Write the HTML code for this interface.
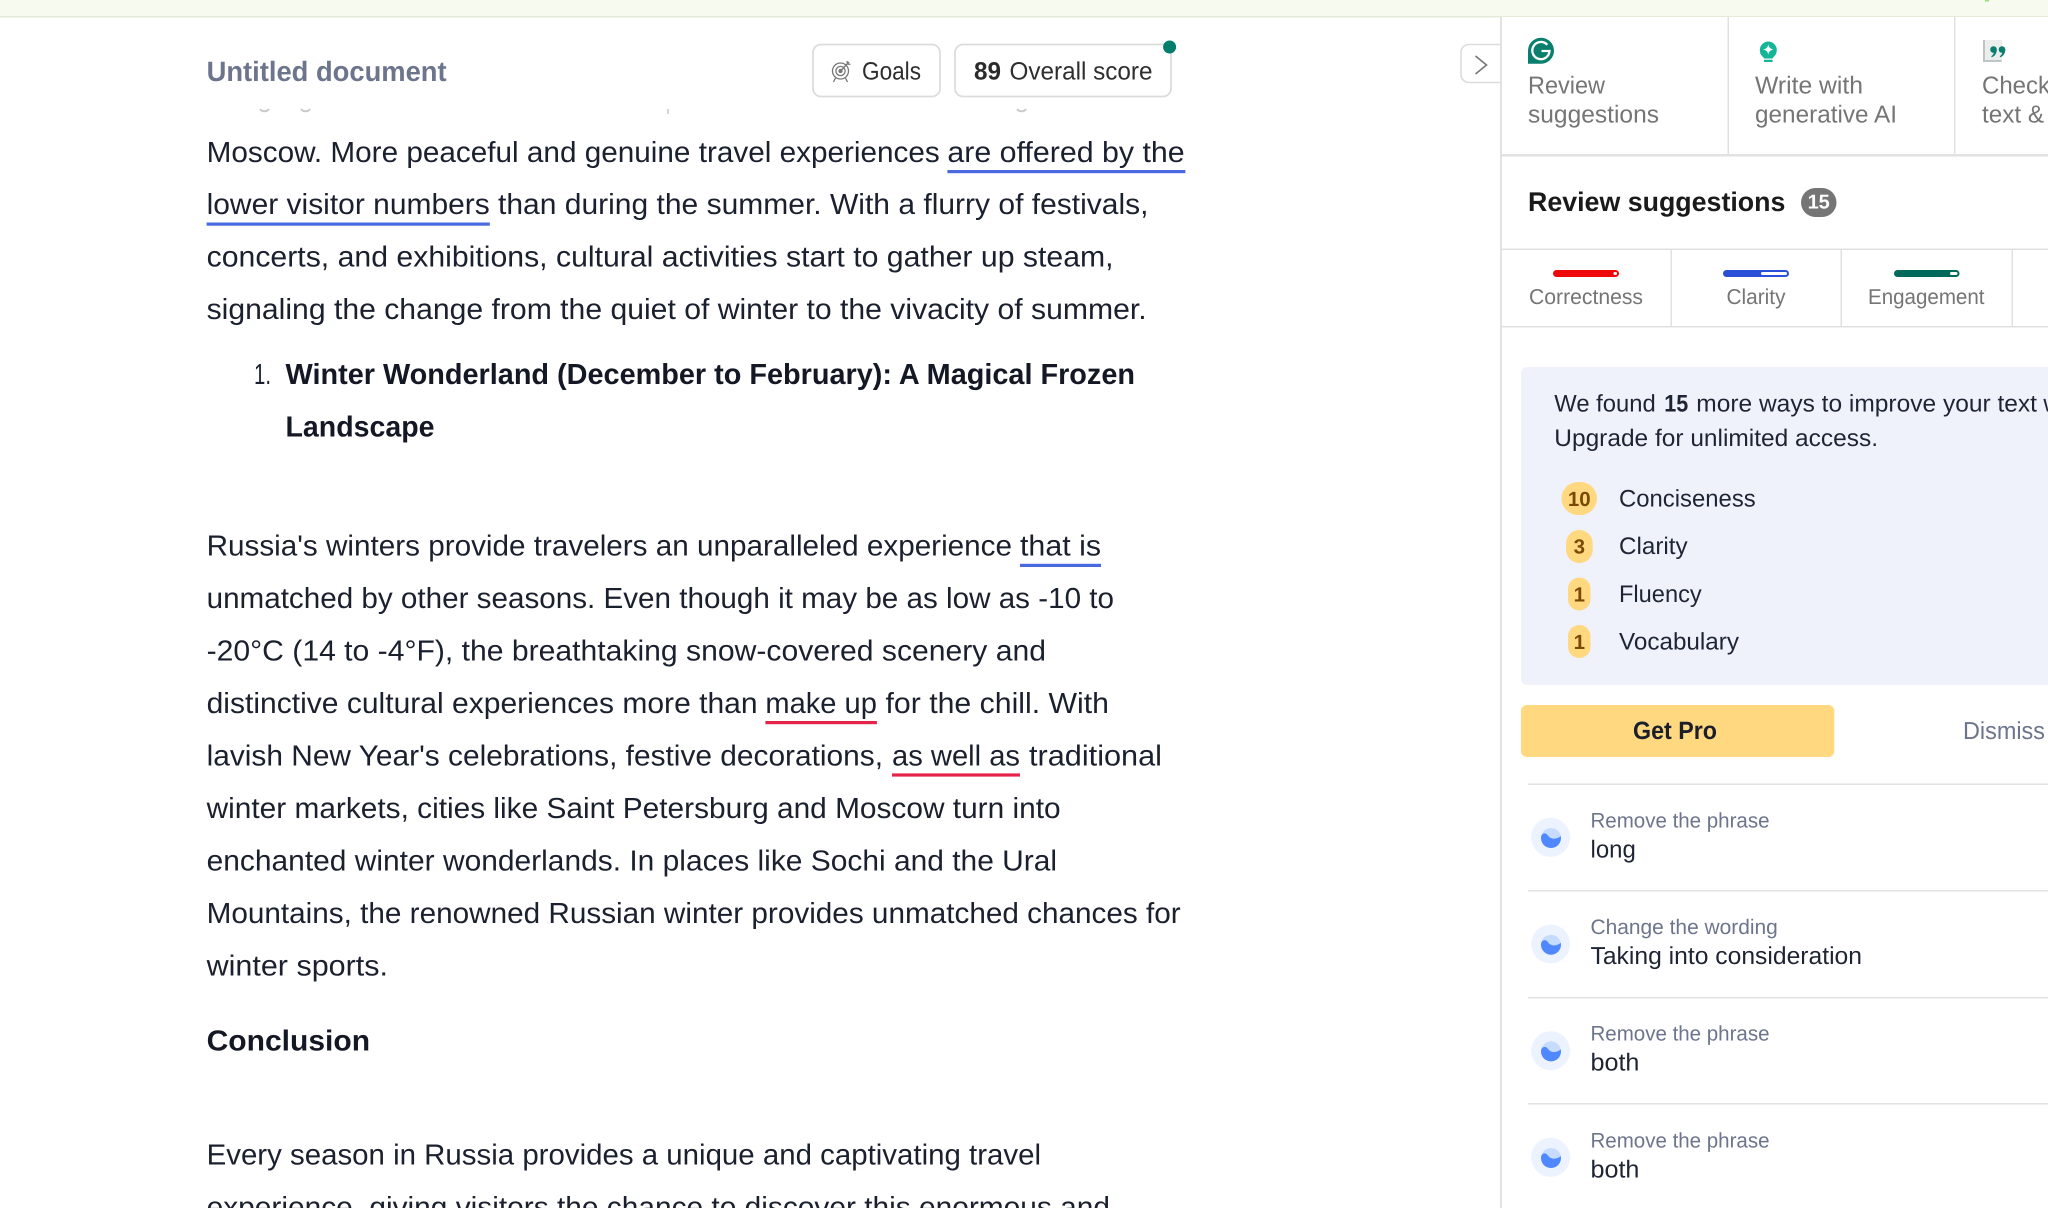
<!DOCTYPE html>
<html><head><meta charset="utf-8"><title>Untitled document</title>
<style>
html,body{margin:0;padding:0;background:#fff;width:2048px;height:1208px;overflow:hidden}
svg{display:block;filter:blur(.3px)}
text{font-family:"Liberation Sans",sans-serif;text-rendering:geometricPrecision;white-space:pre}
.b{font-size:29px;fill:#1b202e}
.h{font-size:29px;font-weight:bold;fill:#141824}
.t{font-size:24.500px;fill:#757575}
.c{font-size:21.500px;fill:#757575}
.p{font-size:24px;fill:#1e2433}
.s{font-size:21px;fill:#6d758d}
.v{font-size:24.500px;fill:#1e2433}
.n{font-size:20.500px;font-weight:bold;fill:#7a4a05;text-anchor:middle}
</style></head><body>
<svg xmlns="http://www.w3.org/2000/svg" width="2048" height="1208" viewBox="0 0 2048 1208">
<rect width="2048" height="1208" fill="#fff"/>
<rect width="2048" height="17" fill="#f6faef"/>
<rect y="16" width="2048" height="1.5" fill="#e4ebd9"/>
<rect x="1985" y="0" width="4" height="1.5" fill="#9be07a"/>

<!-- header -->
<text x="206.600" y="81" font-size="28" font-weight="bold" fill="#6d758d" textLength="240" lengthAdjust="spacingAndGlyphs">Untitled document</text>
<rect x="813" y="44.500" width="127" height="52" rx="8" fill="#fff" stroke="#dcdcdc" stroke-width="1.8"/>
<rect x="955" y="44.500" width="216" height="52" rx="8" fill="#fff" stroke="#dcdcdc" stroke-width="1.8"/>
<g fill="none" stroke="#777" stroke-width="1.300">
<circle cx="840.500" cy="71" r="8"/><circle cx="840.500" cy="71" r="4.600"/><circle cx="840.500" cy="71" r="1.500" fill="#777"/>
<path d="M841 70.500 849 62M847 61l.6 3 2.800.4M835.500 78l-2 4M845.500 78l2 4"/>
</g>
<text x="862" y="79.500" font-size="25" fill="#2e2e2e" textLength="59" lengthAdjust="spacingAndGlyphs">Goals</text>
<text x="974" y="79.500" font-size="25" font-weight="bold" fill="#2b2b2b" textLength="27" lengthAdjust="spacingAndGlyphs">89</text>
<text x="1009.500" y="79.500" font-size="25" fill="#2e2e2e" textLength="143" lengthAdjust="spacingAndGlyphs">Overall score</text>
<circle cx="1169.600" cy="47" r="6.500" fill="#007d6b"/>
<path d="M1500 44.500H1469a8 8 0 0 0-8 8V74.500a8 8 0 0 0 8 8H1500" fill="#fff" stroke="#dcdcdc" stroke-width="1.600"/>
<path d="M1475.500 56 1486.500 65 1475.500 74" fill="none" stroke="#777" stroke-width="1.600"/>

<!-- clipped descender remnants -->
<g fill="none" stroke="#c9c9c9" stroke-width="2">
<path d="M260 109a5 4 0 0 0 9 0M301 109a5 4 0 0 0 9 0M1017 109a5 4 0 0 0 9 0"/>
<path d="M668 109v5" stroke-width="1.500"/>
</g>

<!-- body text -->
<text class="b" x="206.600" y="162" textLength="733.200" lengthAdjust="spacingAndGlyphs">Moscow. More peaceful and genuine travel experiences</text>
<text class="b" x="947.400" y="162" textLength="237.300" lengthAdjust="spacingAndGlyphs">are offered by the</text>
<rect x="947.400" y="170" width="238" height="3.200" fill="#4869e0"/>
<text class="b" x="206.600" y="214" textLength="283.200" lengthAdjust="spacingAndGlyphs">lower visitor numbers</text>
<rect x="206.600" y="222.500" width="283.200" height="3.200" fill="#4869e0"/>
<text class="b" x="498" y="214" textLength="650.500" lengthAdjust="spacingAndGlyphs">than during the summer. With a flurry of festivals,</text>
<text class="b" x="206.600" y="266.500" textLength="907" lengthAdjust="spacingAndGlyphs">concerts, and exhibitions, cultural activities start to gather up steam,</text>
<text class="b" x="206.600" y="319" textLength="940" lengthAdjust="spacingAndGlyphs">signaling the change from the quiet of winter to the vivacity of summer.</text>

<text class="b" x="254" y="384" textLength="17" lengthAdjust="spacingAndGlyphs">1.</text>
<text class="h" x="285.500" y="384" textLength="849.500" lengthAdjust="spacingAndGlyphs">Winter Wonderland (December to February): A Magical Frozen</text>
<text class="h" x="285.500" y="436.500" textLength="149" lengthAdjust="spacingAndGlyphs">Landscape</text>

<text class="b" x="206.600" y="555.500" textLength="805.400" lengthAdjust="spacingAndGlyphs">Russia's winters provide travelers an unparalleled experience</text>
<text class="b" x="1020" y="555.500" textLength="81" lengthAdjust="spacingAndGlyphs">that is</text>
<rect x="1020" y="563.800" width="81" height="3.200" fill="#4869e0"/>
<text class="b" x="206.600" y="608" textLength="907.400" lengthAdjust="spacingAndGlyphs">unmatched by other seasons. Even though it may be as low as -10 to</text>
<text class="b" x="206.600" y="660.500" textLength="839.400" lengthAdjust="spacingAndGlyphs">-20°C (14 to -4°F), the breathtaking snow-covered scenery and</text>
<text class="b" x="206.600" y="713" textLength="551" lengthAdjust="spacingAndGlyphs">distinctive cultural experiences more than</text>
<text class="b" x="765.400" y="713" textLength="111.500" lengthAdjust="spacingAndGlyphs">make up</text>
<rect x="765.400" y="721" width="111.500" height="3.200" fill="#e5234a"/>
<text class="b" x="885.500" y="713" textLength="223.500" lengthAdjust="spacingAndGlyphs">for the chill. With</text>
<text class="b" x="206.600" y="765.400" textLength="676.400" lengthAdjust="spacingAndGlyphs">lavish New Year's celebrations, festive decorations,</text>
<text class="b" x="892" y="765.400" textLength="128" lengthAdjust="spacingAndGlyphs">as well as</text>
<rect x="892" y="773.400" width="128" height="3.200" fill="#e5234a"/>
<text class="b" x="1029" y="765.400" textLength="133" lengthAdjust="spacingAndGlyphs">traditional</text>
<text class="b" x="206.600" y="817.800" textLength="854" lengthAdjust="spacingAndGlyphs">winter markets, cities like Saint Petersburg and Moscow turn into</text>
<text class="b" x="206.600" y="870.500" textLength="850.500" lengthAdjust="spacingAndGlyphs">enchanted winter wonderlands. In places like Sochi and the Ural</text>
<text class="b" x="206.600" y="923" textLength="974.100" lengthAdjust="spacingAndGlyphs">Mountains, the renowned Russian winter provides unmatched chances for</text>
<text class="b" x="206.600" y="975.500" textLength="181.400" lengthAdjust="spacingAndGlyphs">winter sports.</text>
<text class="h" x="206.600" y="1050.500" textLength="163.500" lengthAdjust="spacingAndGlyphs">Conclusion</text>
<text class="b" x="206.600" y="1164.500" textLength="834.400" lengthAdjust="spacingAndGlyphs">Every season in Russia provides a unique and captivating travel</text>
<text class="b" x="206.600" y="1217" textLength="903.400" lengthAdjust="spacingAndGlyphs">experience, giving visitors the chance to discover this enormous and</text>

<!-- right panel -->
<rect x="1500" y="17" width="2" height="1191" fill="#e2e2e2"/>
<rect x="1502" y="17" width="546" height="1191" fill="#fff"/>
<rect x="1727.500" y="17" width="1.500" height="138" fill="#e0e0e0"/>
<rect x="1954" y="17" width="1.500" height="138" fill="#e0e0e0"/>
<rect x="1502" y="154" width="546" height="2.500" fill="#e2e2e2"/>

<!-- G logo -->
<path d="M1528 63.700V50.700a13 13 0 1 1 13 13Z" fill="#0a7f6e"/>
<path d="M1547.300 44.800a8.600 8.600 0 1 0 2.200 6.200h-8" fill="none" stroke="#fff" stroke-width="2.300"/>
<text class="t" x="1528" y="93.500" textLength="77" lengthAdjust="spacingAndGlyphs">Review</text>
<text class="t" x="1528" y="122.500" textLength="131" lengthAdjust="spacingAndGlyphs">suggestions</text>

<!-- bulb -->
<path d="M1768.300 41.500a8.700 8.700 0 0 1 5 15.700l-.7 1.300h-8.600l-.7-1.300a8.700 8.700 0 0 1 5-15.700Z" fill="#15b597"/>
<rect x="1763.800" y="59.800" width="9" height="2.200" rx="1" fill="#15b597"/>
<path d="M1768.300 44.300c.5 3 2 4.700 5.200 5.200-3.200.5-4.700 2.200-5.200 5.200-.5-3-2-4.700-5.200-5.200 3.200-.5 4.700-2.200 5.200-5.200Z" fill="#fff"/>
<text class="t" x="1755" y="93.500" textLength="108" lengthAdjust="spacingAndGlyphs">Write with</text>
<text class="t" x="1755" y="122.500" textLength="142" lengthAdjust="spacingAndGlyphs">generative AI</text>

<!-- quote doc -->
<rect x="1983" y="40" width="18.700" height="22" fill="#bfc4c4"/>
<rect x="1985" y="40" width="16.700" height="20" fill="#eceeee"/>
<g fill="#0a7f6e">
<circle cx="1993.500" cy="49.500" r="3.300"/><path d="M1996.800 49.500c0 4-2 6.500-5 7.800l-.6-1c2-1.200 2.700-3 2.700-5Z"/>
<circle cx="2002" cy="49.500" r="3.300"/><path d="M2005.300 49.500c0 4-2 6.500-5 7.800l-.6-1c2-1.200 2.700-3 2.700-5Z"/>
</g>
<text class="t" x="1982" y="93.500" textLength="68" lengthAdjust="spacingAndGlyphs">Check</text>
<text class="t" x="1982" y="122.500" textLength="62" lengthAdjust="spacingAndGlyphs">text &amp;</text>

<!-- heading -->
<text x="1528" y="211" font-size="27" font-weight="bold" fill="#1a1a1a" textLength="257.400" lengthAdjust="spacingAndGlyphs">Review suggestions</text>
<rect x="1801" y="188" width="35.500" height="29" rx="14.500" fill="#757575"/>
<text x="1818.700" y="208.500" font-size="20" font-weight="bold" fill="#fff" text-anchor="middle">15</text>

<!-- category row -->
<rect x="1502" y="248.500" width="546" height="1.500" fill="#e0e0e0"/>
<rect x="1502" y="326" width="546" height="1.500" fill="#e0e0e0"/>
<rect x="1670.500" y="249" width="1.500" height="78" fill="#e0e0e0"/>
<rect x="1840.500" y="249" width="1.500" height="78" fill="#e0e0e0"/>
<rect x="2011.500" y="249" width="1.500" height="78" fill="#e0e0e0"/>
<rect x="1553" y="270" width="66" height="7" rx="3.500" fill="#ee0a0a"/><rect x="1613.500" y="272" width="3.500" height="3" rx="1.500" fill="#fff"/>
<rect x="1723" y="270" width="66" height="7" rx="3.500" fill="#2b50d8"/><rect x="1761" y="272" width="26" height="3" rx="1.500" fill="#fff"/>
<rect x="1894" y="270" width="65.500" height="7" rx="3.500" fill="#00695a"/><rect x="1950" y="272" width="7.500" height="3" rx="1.500" fill="#fff"/>
<text class="c" x="1529" y="304" textLength="114" lengthAdjust="spacingAndGlyphs">Correctness</text>
<text class="c" x="1726.500" y="304" textLength="59" lengthAdjust="spacingAndGlyphs">Clarity</text>
<text class="c" x="1868" y="304" textLength="116.500" lengthAdjust="spacingAndGlyphs">Engagement</text>

<!-- upgrade panel -->
<rect x="1521" y="367" width="560" height="318" rx="6" fill="#eff2fb"/>
<text class="p" x="1554.300" y="411.700" textLength="101.400" lengthAdjust="spacingAndGlyphs">We found</text>
<text class="p" x="1664.300" y="411.700" font-weight="bold" textLength="24" lengthAdjust="spacingAndGlyphs">15</text>
<text class="p" x="1696.300" y="411.700" textLength="340.700" lengthAdjust="spacingAndGlyphs">more ways to improve your text</text>
<text class="p" x="2043.400" y="411.700">with</text>
<text class="p" x="1554.300" y="446" textLength="323.700" lengthAdjust="spacingAndGlyphs">Upgrade for unlimited access.</text>

<rect x="1561.500" y="482" width="35.500" height="33" rx="16.500" fill="#ffd880"/>
<text class="n" x="1579.300" y="506">10</text>
<rect x="1566" y="530" width="26.700" height="33" rx="13.300" fill="#ffd880"/>
<text class="n" x="1579.300" y="553.500">3</text>
<rect x="1568" y="577.500" width="22.500" height="33" rx="11.200" fill="#ffd880"/>
<text class="n" x="1579.300" y="601.500">1</text>
<rect x="1568" y="625" width="22.500" height="33" rx="11.200" fill="#ffd880"/>
<text class="n" x="1579.300" y="649">1</text>
<text class="p" x="1619" y="506.700" textLength="136.700" lengthAdjust="spacingAndGlyphs">Conciseness</text>
<text class="p" x="1619" y="554" textLength="68.600" lengthAdjust="spacingAndGlyphs">Clarity</text>
<text class="p" x="1619" y="602" textLength="82.700" lengthAdjust="spacingAndGlyphs">Fluency</text>
<text class="p" x="1619" y="649.700" textLength="120" lengthAdjust="spacingAndGlyphs">Vocabulary</text>

<rect x="1521" y="705" width="313.300" height="52" rx="6" fill="#ffd880"/>
<text x="1633" y="739" font-size="25" font-weight="bold" fill="#1a1f2b" textLength="84" lengthAdjust="spacingAndGlyphs">Get Pro</text>
<text x="1963" y="739" font-size="24.500" fill="#6d758d" textLength="82" lengthAdjust="spacingAndGlyphs">Dismiss</text>

<!-- list -->
<rect x="1528" y="783.500" width="520" height="1.500" fill="#e2e2e2"/>
<rect x="1528" y="890" width="520" height="1.500" fill="#e2e2e2"/>
<rect x="1528" y="997" width="520" height="1.500" fill="#e2e2e2"/>
<rect x="1528" y="1103" width="520" height="1.500" fill="#e2e2e2"/>

<g><circle cx="1550.600" cy="837.300" r="19.500" fill="#ecf3ff"/><circle cx="1551" cy="838" r="10" fill="#c5dcff"/><path d="M1541.200 836C1543 832.500 1546 832.800 1548 835.500 1550.500 839.200 1556 840 1560.800 836A10 10 0 1 1 1541.200 836Z" fill="#5088ff"/></g>
<g transform="translate(0 106.700)"><circle cx="1550.600" cy="837.300" r="19.500" fill="#ecf3ff"/><circle cx="1551" cy="838" r="10" fill="#c5dcff"/><path d="M1541.200 836C1543 832.500 1546 832.800 1548 835.500 1550.500 839.200 1556 840 1560.800 836A10 10 0 1 1 1541.200 836Z" fill="#5088ff"/></g>
<g transform="translate(0 213.400)"><circle cx="1550.600" cy="837.300" r="19.500" fill="#ecf3ff"/><circle cx="1551" cy="838" r="10" fill="#c5dcff"/><path d="M1541.200 836C1543 832.500 1546 832.800 1548 835.500 1550.500 839.200 1556 840 1560.800 836A10 10 0 1 1 1541.200 836Z" fill="#5088ff"/></g>
<g transform="translate(0 320)"><circle cx="1550.600" cy="837.300" r="19.500" fill="#ecf3ff"/><circle cx="1551" cy="838" r="10" fill="#c5dcff"/><path d="M1541.200 836C1543 832.500 1546 832.800 1548 835.500 1550.500 839.200 1556 840 1560.800 836A10 10 0 1 1 1541.200 836Z" fill="#5088ff"/></g>

<text class="s" x="1590.500" y="827.300" textLength="179" lengthAdjust="spacingAndGlyphs">Remove the phrase</text>
<text class="v" x="1590.500" y="857.500" textLength="45.300" lengthAdjust="spacingAndGlyphs">long</text>
<text class="s" x="1590.500" y="934" textLength="187.300" lengthAdjust="spacingAndGlyphs">Change the wording</text>
<text class="v" x="1590.500" y="964" textLength="271.500" lengthAdjust="spacingAndGlyphs">Taking into consideration</text>
<text class="s" x="1590.500" y="1040.700" textLength="179" lengthAdjust="spacingAndGlyphs">Remove the phrase</text>
<text class="v" x="1590.500" y="1070.500" textLength="48.900" lengthAdjust="spacingAndGlyphs">both</text>
<text class="s" x="1590.500" y="1147.300" textLength="179" lengthAdjust="spacingAndGlyphs">Remove the phrase</text>
<text class="v" x="1590.500" y="1177.500" textLength="48.900" lengthAdjust="spacingAndGlyphs">both</text>
</svg>
</body></html>
